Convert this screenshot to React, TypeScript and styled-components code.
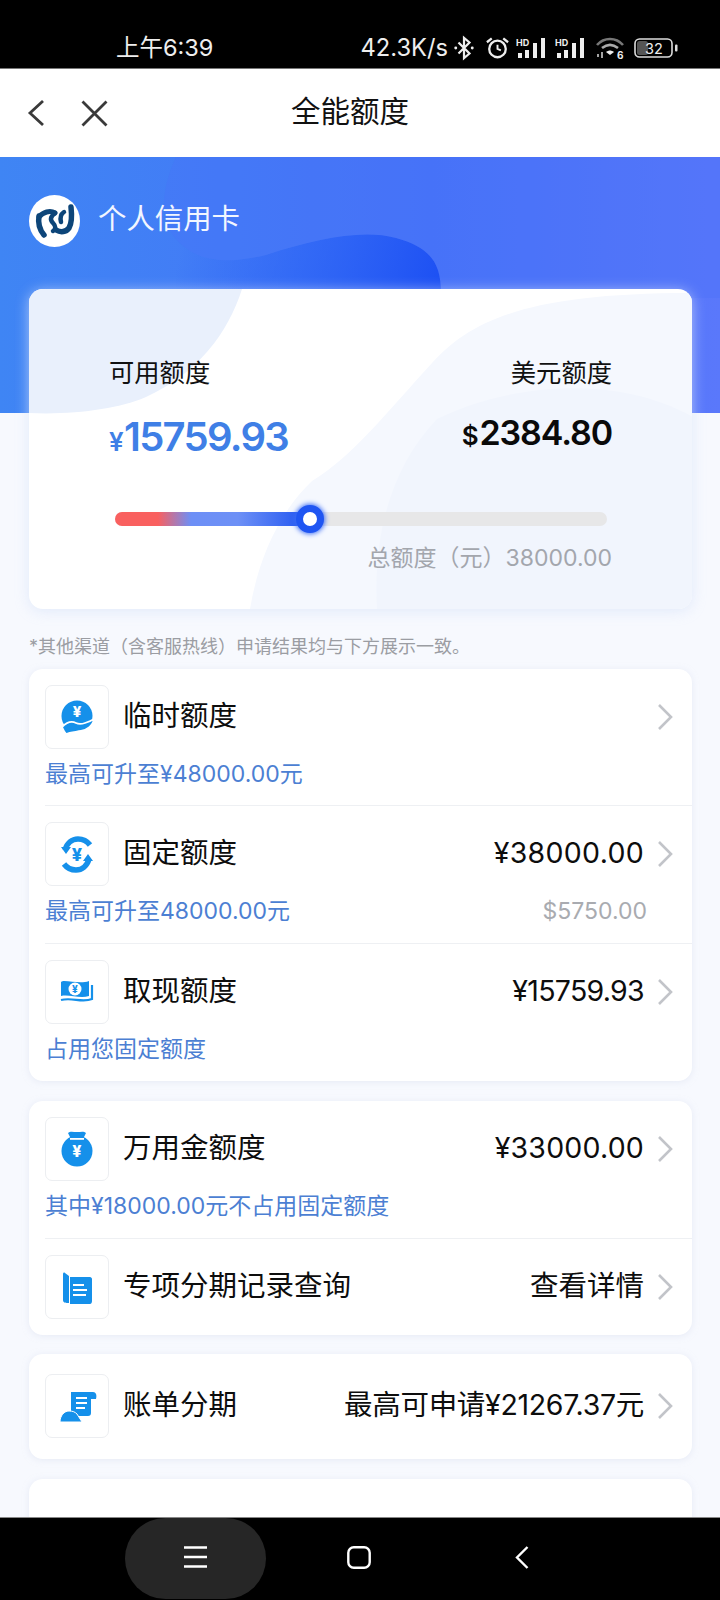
import React from "react";
import styled, { createGlobalStyle } from "styled-components";

const GlobalStyle = createGlobalStyle`
  html, body {
    margin: 0;
    padding: 0;
    background: #000;
  }
  * {
    box-sizing: border-box;
  }
`;

const FONT = `Inter, "Noto Sans CJK SC", sans-serif`;
const ICON_BLUE = "#1590ea";

const Screen = styled.div`
  width: 720px;
  height: 1600px;
  display: flex;
  flex-direction: column;
  overflow: hidden;
  font-family: ${FONT};
  background: #f7f9fe;
`;

const StatusBar = styled.header`
  height: 69px;
  flex: none;
  display: flex;
  align-items: flex-end;
  padding: 0 42px 3px 116px;
  background: #000;
  border-bottom: 1px solid #777;
  color: #eee;
`;

const StatusTime = styled.span`
  font-size: 23.5px;
  line-height: 34px;
  flex: 1;
`;

const StatusSpeed = styled.span`
  font-size: 23.7px;
  line-height: 34px;
`;

const StatusIcons = styled.div`
  display: flex;
  align-items: center;
  height: 34px;
`;

const StatusSlot = styled.span<{ $left: number }>`
  display: flex;
  margin-left: ${({ $left }) => $left}px;
`;

const TitleBar = styled.nav`
  height: 88px;
  flex: none;
  display: flex;
  align-items: center;
  padding-left: 27px;
  background: #fff;
  position: relative;
`;

const NavButtons = styled.div`
  display: flex;
  align-items: center;
  gap: 36px;
`;

const PageTitle = styled.h1`
  margin: 0;
  position: absolute;
  left: 0;
  right: 20px;
  top: 22px;
  text-align: center;
  font-size: 29.5px;
  line-height: 40px;
  font-weight: 400;
  color: #111;
`;

const Hero = styled.section`
  height: 256px;
  flex: none;
  position: relative;
  overflow: hidden;
  background: linear-gradient(90deg, #3f85f4 0%, #4673f8 60%, #5a78fb 100%);
`;

const HeroBlob = styled.svg`
  position: absolute;
  left: 0;
  top: 0;
`;

const HeroTitle = styled.div`
  position: relative;
  display: flex;
  align-items: center;
  gap: 18px;
  padding: 38px 0 0 29px;
`;

const LogoCircle = styled.div`
  width: 51px;
  height: 52px;
  border-radius: 50%;
  background: #fff;
`;

const HeroText = styled.span`
  font-size: 28.4px;
  line-height: 40px;
  padding-bottom: 4px;
  color: #f2f6ff;
`;

const Content = styled.main`
  flex: 1;
  min-height: 0;
  position: relative;
  display: flex;
  flex-direction: column;
  padding: 0 28px 0 29px;
`;

const QuotaCard = styled.section`
  height: 320px;
  flex: none;
  margin-top: -124px;
  position: relative;
  overflow: hidden;
  border-radius: 14px;
  background: #fff;
  box-shadow: 0 2px 14px rgba(215, 226, 250, 0.7);
  padding: 67px 80px 0;
`;

const CardBlob = styled.svg`
  position: absolute;
  left: 0;
  top: 0;
`;

const QuotaInner = styled.div`
  position: relative;
`;

const QuotaColumns = styled.div`
  display: flex;
  justify-content: space-between;
`;

const QuotaColumn = styled.div<{ $right?: boolean }>`
  display: flex;
  flex-direction: column;
  align-items: ${({ $right }) => ($right ? "flex-end" : "flex-start")};
`;

const QuotaLabel = styled.div`
  font-size: 25.3px;
  line-height: 34px;
  color: #111;
`;

const QuotaValue = styled.div<{ $right?: boolean }>`
  margin-top: ${({ $right }) => ($right ? "18px" : "22px")};
  height: 50px;
  display: flex;
  align-items: baseline;
  line-height: 50px;
  font-weight: 600;
  font-size: ${({ $right }) => ($right ? "34px" : "40px")};
  color: ${({ $right }) => ($right ? "#0a0a0a" : "#3f7fe6")};
  letter-spacing: ${({ $right }) => ($right ? "-1.1px" : "-1.7px")};
`;

const Currency = styled.span<{ $right?: boolean }>`
  font-size: ${({ $right }) => ($right ? "26px" : "26px")};
  margin-right: 2px;
`;

const SliderTrack = styled.div`
  position: relative;
  height: 14px;
  margin: 50px 5px 0 6px;
  border-radius: 7px;
  background: #e7e7e8;
`;

const SliderFill = styled.div<{ $percent: number }>`
  width: ${({ $percent }) => $percent}%;
  height: 100%;
  border-radius: 7px 0 0 7px;
  background: linear-gradient(
    90deg,
    #f9605f 0%,
    #f9605f 22%,
    #6d8ff6 39%,
    #6d90f6 63%,
    #1d52f0 100%
  );
`;

const SliderThumb = styled.div<{ $percent: number }>`
  position: absolute;
  left: ${({ $percent }) => $percent}%;
  top: 50%;
  width: 28px;
  height: 28px;
  margin: -14px 0 0 -14px;
  border-radius: 50%;
  background: #fff;
  border: 7.5px solid #1f55f2;
  box-shadow: 0 0 5px 1px #3b6cf5;
`;

const TotalLine = styled.div`
  margin-top: 17px;
  text-align: right;
  font-size: 23px;
  line-height: 30px;
  color: #a3a6ad;
`;

const Note = styled.p`
  margin: 26px 0 10px;
  font-size: 18px;
  line-height: 24px;
  color: #9b9da3;
  white-space: nowrap;
`;

const ListCard = styled.section<{ $gap?: number }>`
  flex: none;
  background: #fff;
  border-radius: 14px;
  box-shadow: 0 1px 6px rgba(215, 222, 238, 0.5);
  margin-bottom: ${({ $gap }) => $gap ?? 20}px;
`;

const Row = styled.div<{ $top?: number; $height: number }>`
  height: ${({ $height }) => $height}px;
  padding-top: ${({ $top }) => $top ?? 16}px;
  margin-left: 16px;
  border-bottom: 1px solid #eef0f3;
  &:last-child {
    border-bottom: none;
  }
`;

const RowMain = styled.div`
  display: flex;
  align-items: center;
  padding-right: 19px;
`;

const IconBox = styled.div`
  width: 64px;
  height: 64px;
  flex: none;
  border: 1px solid #eceef1;
  border-radius: 7px;
  background: #fff;
`;

const RowTitle = styled.div`
  flex: 1;
  margin-left: 14px;
  padding-bottom: 2px;
  font-size: 28.5px;
  line-height: 40px;
  color: #0d0d0d;
`;

const RowValue = styled.div<{ $spacing?: number }>`
  padding-bottom: 2px;
  font-size: 28.5px;
  line-height: 40px;
  color: #0d0d0d;
  margin-right: 13px;
  letter-spacing: ${({ $spacing }) => $spacing ?? 0}px;
`;

const RowSub = styled.div`
  display: flex;
  justify-content: space-between;
  margin-top: 10px;
  padding-right: 45px;
  font-size: 23px;
  line-height: 30px;
  color: #4c7fd3;
`;

const RowSubMuted = styled.span`
  color: #a9abb0;
`;

const NavBar = styled.footer`
  height: 83px;
  flex: none;
  position: relative;
  z-index: 1;
  display: flex;
  align-items: center;
  background: #000;
  border-top: 1px solid #888;
`;

const NavPill = styled.div`
  position: absolute;
  left: 125px;
  top: 0;
  width: 141px;
  height: 81px;
  border-radius: 50px;
  background: #262626;
`;

const NavIconSlot = styled.div<{ $x: number }>`
  position: absolute;
  left: ${({ $x }) => $x}px;
  top: 28px;
  display: flex;
`;

const Chevron = () => (
  <svg width="16" height="28" viewBox="0 0 16 28" fill="none">
    <path d="M2 2l12 12L2 26" stroke="#c2c4c9" strokeWidth="2.6" />
  </svg>
);

const BackIcon = () => (
  <svg width="18" height="28" viewBox="0 0 18 28" fill="none">
    <path d="M16 2L3 14l13 12" stroke="#3a3a3a" strokeWidth="2.8" />
  </svg>
);

const CloseIcon = () => (
  <svg width="27" height="27" viewBox="0 0 27 27" fill="none">
    <path d="M1.500 1.500l24 24M25.500 1.500l-24 24" stroke="#3a3a3a" strokeWidth="2.8" />
  </svg>
);

const Bluetooth = () => (
  <svg width="22" height="26" viewBox="0 0 24 26" fill="none" stroke="#eee" strokeWidth="2.4">
    <path d="M6 7l12 12-6 5V2l6 5L6 19" />
    <circle cx="3" cy="13" r="1.600" fill="#eee" stroke="none" />
    <circle cx="21" cy="13" r="1.600" fill="#eee" stroke="none" />
  </svg>
);

const Alarm = () => (
  <svg width="25" height="24" viewBox="0 0 26 24" fill="none" stroke="#eee" strokeWidth="2.4">
    <circle cx="13" cy="13" r="8.600" />
    <path d="M13 8.500V13l3.500 1.500" strokeWidth="2" />
    <path d="M2 6l5-4M24 6l-5-4" />
  </svg>
);

const Signal = () => (
  <svg width="32" height="26" viewBox="0 0 32 26">
    <text x="0" y="11" fontSize="9" fontWeight="700" fill="#eee" fontFamily="Inter, sans-serif">HD</text>
    <rect x="2" y="18" width="4" height="5" fill="#eee" />
    <rect x="9" y="15" width="4" height="8" fill="#eee" />
    <rect x="17" y="8" width="4" height="15" fill="#eee" />
    <rect x="25" y="3" width="4" height="20" fill="#eee" />
  </svg>
);

const Wifi = () => (
  <svg width="28" height="28" viewBox="0 0 28 28" fill="none">
    <path d="M1 11c7-8 19-8 26 0" stroke="#777" strokeWidth="2.600" />
    <path d="M6 14c5-4 11-4 16 0" stroke="#aaa" strokeWidth="2.600" />
    <path d="M10 18c3-2 5-2 8 0l-4 3z" fill="#eee" />
    <text x="21" y="25" fontSize="10" fontWeight="700" fill="#eee" fontFamily="Inter, sans-serif">6</text>
    <path d="M2 23v-3M6 24v-6" stroke="#ccc" strokeWidth="1.600" />
  </svg>
);

const Battery = () => (
  <svg width="44" height="24" viewBox="0 0 44 24">
    <rect x="1" y="3" width="37" height="18" rx="4.500" fill="none" stroke="#ddd" strokeWidth="1.600" />
    <rect x="3" y="5" width="11" height="14" rx="2.500" fill="#555" />
    <rect x="41" y="8.500" width="2.500" height="7" rx="1" fill="#ddd" />
    <text x="20" y="17.500" fontSize="14.500" textAnchor="middle" fill="#eee" fontFamily="Inter, sans-serif">32</text>
  </svg>
);

const PsdLogo = () => (
  <svg width="51" height="52" viewBox="0 0 51 52" fill="none" stroke="#0d4579" strokeLinecap="round">
    <path d="M10 21c-1 6 0 13 5 19" strokeWidth="5.500" />
    <path d="M10 22c4-5 11-7 16-4" strokeWidth="5" />
    <path d="M26 18c-5 4-5 7-2 10 3 3 3 6 0 8" strokeWidth="4.500" />
    <path d="M42 12c1 9 1 16-2 21-3 4-8 5-13 2" strokeWidth="5.500" />
    <path d="M35 17c-3 2-4 6-3 10" strokeWidth="4.500" />
  </svg>
);

const YuanMark = ({ x, y, size, fill = "#fff" }: { x: number; y: number; size: number; fill?: string }) => (
  <text x={x} y={y} fontSize={size} fontWeight="800" textAnchor="middle" fill={fill} fontFamily="Inter, sans-serif">
    ¥
  </text>
);

const HandIcon = () => (
  <svg width="62" height="62" viewBox="0 0 62 62">
    <circle cx="31" cy="30" r="15.500" fill={ICON_BLUE} />
    <YuanMark x={31} y={31} size={15} />
    <path
      d="M16 41c5-5 10-6 14-4 2 1 6 1 9 0 3-1 6-2 9-4-1 7-7 11-13 12-5 1-11 1-15 3-2-2-3-5-4-7z"
      fill={ICON_BLUE}
      stroke="#fff"
      strokeWidth="1.800"
    />
  </svg>
);

const ExchangeIcon = () => (
  <svg width="62" height="62" viewBox="0 0 62 62" fill="none">
    <path d="M19 27c2-7 7-11 13-11 5 0 9 2 12 6" stroke={ICON_BLUE} strokeWidth="5.500" />
    <path d="M15 24h10l-5 7zM47 38H37l5-7z" fill={ICON_BLUE} />
    <path d="M43 36c-2 7-7 11-13 11-5 0-9-2-12-6" stroke={ICON_BLUE} strokeWidth="5.500" />
    <YuanMark x={31} y={38} size={18} fill={ICON_BLUE} />
  </svg>
);

const BillIcon = () => (
  <svg width="62" height="62" viewBox="0 0 62 62" fill="none">
    <path d="M15 21c1-1 2-1 3-1 8 0 17 3 25 0v15c-9 3-20-2-28 0z" fill={ICON_BLUE} />
    <circle cx="29" cy="28" r="6.500" fill="#fff" />
    <YuanMark x={29} y={32} size={10} fill={ICON_BLUE} />
    <path d="M46 24v14c-10 4-20-2-31 1" stroke={ICON_BLUE} strokeWidth="2.200" />
  </svg>
);

const BagIcon = () => (
  <svg width="62" height="62" viewBox="0 0 62 62">
    <path d="M22 15c2-2 5-1 9-1s7-1 9 1l-3 6H25z" fill={ICON_BLUE} />
    <circle cx="31" cy="33" r="15.500" fill={ICON_BLUE} />
    <rect x="24" y="20" width="14" height="1.800" fill="#fff" />
    <YuanMark x={31} y={39} size={16} />
  </svg>
);

const RecordIcon = () => (
  <svg width="62" height="62" viewBox="0 0 62 62">
    <path d="M17 18c0-1 1-2 2-1l4 3v27c-3 0-6 0-6-3z" fill={ICON_BLUE} />
    <path d="M24 21h20c1 0 2 1 2 2v22c0 2-1 3-2 3H24z" fill={ICON_BLUE} />
    <rect x="27" y="28" width="11" height="2" fill="#fff" />
    <rect x="27" y="33" width="14" height="2" fill="#fff" />
    <rect x="27" y="38" width="13" height="2" fill="#fff" />
  </svg>
);

const ScrollIcon = () => (
  <svg width="62" height="62" viewBox="0 0 62 62">
    <path d="M25 17h22c3 0 4 3 3 7h-5v14c0 2-1 3-3 3H24c1-1 1-2 1-3z" fill={ICON_BLUE} />
    <rect x="30" y="22" width="11" height="2" fill="#fff" />
    <rect x="30" y="27" width="11" height="2" fill="#fff" />
    <rect x="30" y="32" width="9" height="2" fill="#fff" />
    <path d="M14 47c0-6 4-11 9-11 4 0 6 1 8 3l5 8z" fill={ICON_BLUE} stroke="#fff" strokeWidth="1" />
  </svg>
);

const MenuNavIcon = () => (
  <svg width="23" height="22" viewBox="0 0 23 22" stroke="#fff" strokeWidth="2.600">
    <path d="M0 1.500h23M0 11h23M0 20.500h23" />
  </svg>
);

const SquareNavIcon = () => (
  <svg width="24" height="23" viewBox="0 0 24 23" fill="none">
    <rect x="1.300" y="1.300" width="21.400" height="20.400" rx="5.500" stroke="#fff" strokeWidth="2.400" />
  </svg>
);

const BackNavIcon = () => (
  <svg width="14" height="23" viewBox="0 0 14 23" fill="none">
    <path d="M12.500 1L2 11.500 12.500 22" stroke="#fff" strokeWidth="2.400" />
  </svg>
);

const App = () => (
  <>
    <GlobalStyle />
    <Screen>
      <StatusBar>
        <StatusTime>上午6:39</StatusTime>
        <StatusSpeed>42.3K/s</StatusSpeed>
        <StatusIcons>
          <StatusSlot $left={5}><Bluetooth /></StatusSlot>
          <StatusSlot $left={10}><Alarm /></StatusSlot>
          <StatusSlot $left={6}><Signal /></StatusSlot>
          <StatusSlot $left={7}><Signal /></StatusSlot>
          <StatusSlot $left={9}><Wifi /></StatusSlot>
          <StatusSlot $left={10}><Battery /></StatusSlot>
        </StatusIcons>
      </StatusBar>

      <TitleBar>
        <NavButtons>
          <BackIcon />
          <CloseIcon />
        </NavButtons>
        <PageTitle>全能额度</PageTitle>
      </TitleBar>

      <Hero>
        <HeroBlob width="720" height="256" viewBox="0 0 720 256">
          <defs>
            <linearGradient id="heroDark" gradientUnits="userSpaceOnUse" x1="190" y1="60" x2="440" y2="130">
              <stop offset="0" stopColor="#2a62f5" stopOpacity="0" />
              <stop offset="0.450" stopColor="#2a62f5" stopOpacity="0.650" />
              <stop offset="1" stopColor="#1d50f3" />
            </linearGradient>
          </defs>
          <path
            d="M176 0c-14 30-18 62 0 82 16 18 40 28 90 16 50-16 96-26 130-17 36 10 46 26 45 60l-1 4H176z"
            fill="url(#heroDark)"
          />
          <path
            d="M176 0c-14 30-18 62 0 82 16 18 40 28 90 16 50-16 96-26 130-17 36 10 46 26 45 60h279V0z"
            fill="#4a6ff8"
            opacity="0.300"
          />
        </HeroBlob>
        <HeroTitle>
          <LogoCircle>
            <PsdLogo />
          </LogoCircle>
          <HeroText>个人信用卡</HeroText>
        </HeroTitle>
      </Hero>

      <Content>
        <QuotaCard>
          <CardBlob width="664" height="320" viewBox="0 0 664 320">
            <path d="M0 0h213c-14 44-44 84-96 108-28 12-72 18-117 16z" fill="#e9f0fc" />
            <path d="M221 320c8-48 28-96 62-128 40-24 76-70 120-118 40-44 98-70 261-70v316z" fill="#f5f8fe" />
            <path d="M348 320c-4-70 12-140 60-190 60-30 170-50 256-2v192z" fill="#f1f5fd" />
          </CardBlob>
          <QuotaInner>
            <QuotaColumns>
              <QuotaColumn>
                <QuotaLabel>可用额度</QuotaLabel>
                <QuotaValue>
                  <Currency>¥</Currency>15759.93
                </QuotaValue>
              </QuotaColumn>
              <QuotaColumn $right>
                <QuotaLabel>美元额度</QuotaLabel>
                <QuotaValue $right>
                  <Currency $right>$</Currency>2384.80
                </QuotaValue>
              </QuotaColumn>
            </QuotaColumns>
            <SliderTrack>
              <SliderFill $percent={39.7} />
              <SliderThumb $percent={39.7} />
            </SliderTrack>
            <TotalLine>总额度（元）38000.00</TotalLine>
          </QuotaInner>
        </QuotaCard>

        <Note>*其他渠道（含客服热线）申请结果均与下方展示一致。</Note>

        <ListCard>
          <Row $height={137}>
            <RowMain>
              <IconBox><HandIcon /></IconBox>
              <RowTitle>临时额度</RowTitle>
              <Chevron />
            </RowMain>
            <RowSub>最高可升至¥48000.00元</RowSub>
          </Row>
          <Row $height={138}>
            <RowMain>
              <IconBox><ExchangeIcon /></IconBox>
              <RowTitle>固定额度</RowTitle>
              <RowValue $spacing={0.3}>¥38000.00</RowValue>
              <Chevron />
            </RowMain>
            <RowSub>
              最高可升至48000.00元
              <RowSubMuted>$5750.00</RowSubMuted>
            </RowSub>
          </Row>
          <Row $height={137}>
            <RowMain>
              <IconBox><BillIcon /></IconBox>
              <RowTitle>取现额度</RowTitle>
              <RowValue $spacing={-0.7}>¥15759.93</RowValue>
              <Chevron />
            </RowMain>
            <RowSub>占用您固定额度</RowSub>
          </Row>
        </ListCard>

        <ListCard $gap={19}>
          <Row $height={138}>
            <RowMain>
              <IconBox><BagIcon /></IconBox>
              <RowTitle>万用金额度</RowTitle>
              <RowValue $spacing={0.2}>¥33000.00</RowValue>
              <Chevron />
            </RowMain>
            <RowSub>其中¥18000.00元不占用固定额度</RowSub>
          </Row>
          <Row $height={96}>
            <RowMain>
              <IconBox><RecordIcon /></IconBox>
              <RowTitle>专项分期记录查询</RowTitle>
              <RowValue>查看详情</RowValue>
              <Chevron />
            </RowMain>
          </Row>
        </ListCard>

        <ListCard>
          <Row $height={105} $top={20}>
            <RowMain>
              <IconBox><ScrollIcon /></IconBox>
              <RowTitle>账单分期</RowTitle>
              <RowValue $spacing={-0.3}>最高可申请¥21267.37元</RowValue>
              <Chevron />
            </RowMain>
          </Row>
        </ListCard>

        <ListCard>
          <Row $height={104} />
        </ListCard>
      </Content>

      <NavBar>
        <NavPill />
        <NavIconSlot $x={184}><MenuNavIcon /></NavIconSlot>
        <NavIconSlot $x={347}><SquareNavIcon /></NavIconSlot>
        <NavIconSlot $x={515}><BackNavIcon /></NavIconSlot>
      </NavBar>
    </Screen>
  </>
);

export default App;
